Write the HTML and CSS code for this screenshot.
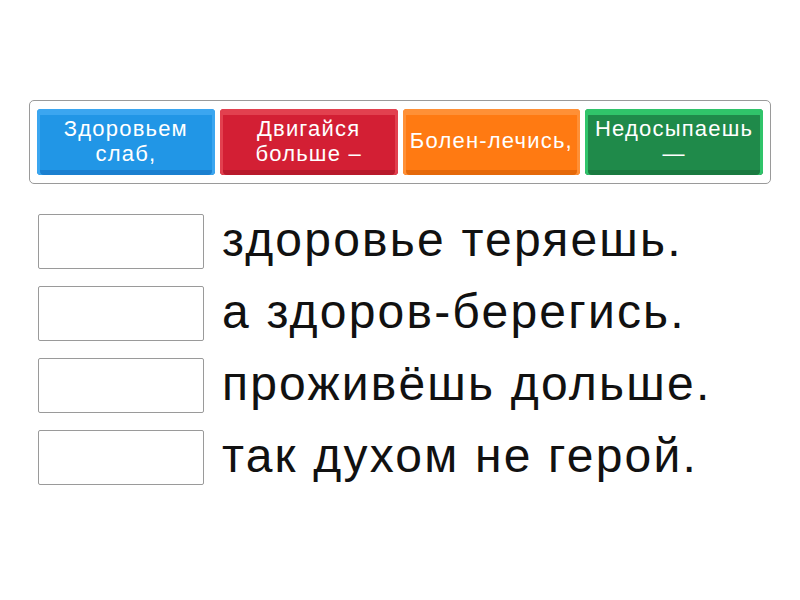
FILE: index.html
```html
<!DOCTYPE html>
<html lang="ru">
<head>
<meta charset="utf-8">
<link rel="stylesheet" href="styles.css">
</head>
<body>
<div class="page">
  <div class="bank">
    <div class="tile blue"><span>Здоровьем слаб,</span></div>
    <div class="tile red"><span>Двигайся больше –</span></div>
    <div class="tile orange"><span>Болен-лечись,</span></div>
    <div class="tile green"><span>Недосыпаешь —</span></div>
  </div>
  <div class="rows">
    <div class="row"><div class="slot"></div><div class="phrase">здоровье теряешь.</div></div>
    <div class="row"><div class="slot"></div><div class="phrase">а здоров-берегись.</div></div>
    <div class="row"><div class="slot"></div><div class="phrase">проживёшь дольше.</div></div>
    <div class="row"><div class="slot"></div><div class="phrase">так духом не герой.</div></div>
  </div>
</div>
</body>
</html>
```
FILE: styles.css
```css
html, body {
  margin: 0;
  padding: 0;
  background: #ffffff;
}
body {
  font-family: "Liberation Sans", Arial, sans-serif;
}
.page {
  padding: 100px 29px 0 29px;
}
.bank {
  box-sizing: border-box;
  width: 742px;
  height: 84px;
  border: 1px solid #9a9a9a;
  border-radius: 5px;
  padding: 8px 7px 8px 7px;
  display: flex;
  gap: 5px;
}
.tile {
  box-sizing: border-box;
  width: 178px;
  height: 66px;
  border-radius: 4px;
  display: flex;
  align-items: center;
  justify-content: center;
  text-align: center;
  color: #ffffff;
  font-size: 22px;
  letter-spacing: 1.2px;
  line-height: 25px;
  padding: 0 2px 3px;
}
.tile span { display: block; }
.blue {
  background: #2196e6;
  box-shadow: inset 0 6px 0 #3ba6f0, inset 3px 0 0 #3ba6f0, inset -3px 0 0 #3ba6f0, inset 0 -5px 0 #1b80d0;
}
.red {
  background: #d31f34;
  box-shadow: inset 0 6px 0 #e2404f, inset 3px 0 0 #e2404f, inset -3px 0 0 #e2404f, inset 0 -5px 0 #b81a2c;
}
.orange {
  background: #ff7a12;
  box-shadow: inset 0 6px 0 #ff9036, inset 3px 0 0 #ff9036, inset -3px 0 0 #ff9036, inset 0 -5px 0 #e5690a;
}
.green {
  background: #1f8a4a;
  box-shadow: inset 0 6px 0 #30c46a, inset 3px 0 0 #30c46a, inset -3px 0 0 #30c46a, inset 0 -5px 0 #1a7a40;
}
.rows {
  margin-top: 30px;
  padding-left: 9px;
  display: flex;
  flex-direction: column;
  gap: 17px;
}
.row {
  display: flex;
  align-items: center;
  gap: 18px;
  height: 55px;
}
.slot {
  box-sizing: border-box;
  width: 166px;
  height: 55px;
  border: 1px solid #9a9a9a;
  border-radius: 2px;
  background: #ffffff;
}
.phrase {
  font-size: 48px;
  letter-spacing: 2.2px;
  color: #111111;
  line-height: 54px;
  padding-bottom: 4px;
  white-space: nowrap;
}
```
